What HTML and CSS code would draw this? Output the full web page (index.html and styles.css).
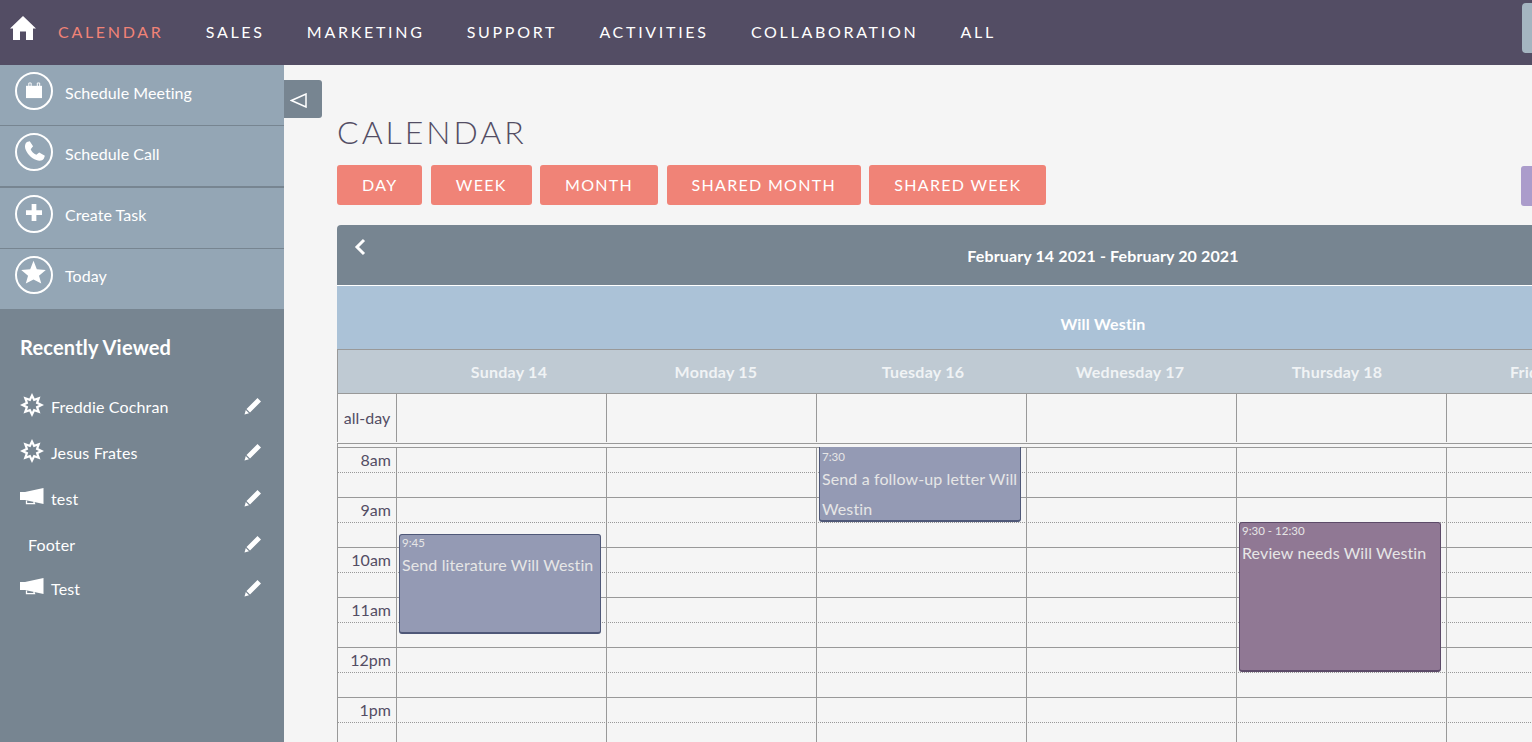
FILE: index.html
```html
<!DOCTYPE html>
<html lang="en">
<head>
    <meta charset="UTF-8">
    <meta name="viewport" content="width=device-width, initial-scale=1.0">
    <title>Calendar</title>
    <link rel="stylesheet" href="styles.css">
</head>
<body>
    <div class="topnav">
        <svg class="home-icon" viewBox="0 0 26 26"><path d="M13 1 L26 13.5 L23 13.5 L23 25 L16 25 L16 16.5 L10 16.5 L10 25 L3 25 L3 13.5 L0 13.5 Z" fill="#fff"/></svg>
        <a class="nav-link active">Calendar</a>
        <a class="nav-link">Sales</a>
        <a class="nav-link">Marketing</a>
        <a class="nav-link">Support</a>
        <a class="nav-link">Activities</a>
        <a class="nav-link">Collaboration</a>
        <a class="nav-link">All</a>
        <div class="nav-search"></div>
    </div>

    <div class="layout">
        <div class="sidebar">
            <div class="action-row">
                <span class="action-icon">
                    <svg viewBox="0 0 36 36"><path d="M9.5 12.5 H26.5 V25.5 H9.5 Z" fill="#fff"/><path d="M12.5 13 V9.5 H15 V13 M21.5 13 V9.5 H24 V13" fill="none" stroke="#fff" stroke-width="1"/></svg>
                </span>
                Schedule Meeting
            </div>
            <div class="action-row wide">
                <span class="action-icon">
                    <svg viewBox="0 0 36 36"><path d="M10.5 7.5 L13.5 6.5 L17 12 L14.5 15 C15.5 17.5 17.5 19.5 20.5 21 L23.5 18.5 L29.5 22 L28.5 25 C27 27.5 23.5 28 20.5 26.5 C15 24.5 10.5 19.5 8.8 14.5 C8 12 8.5 9 10.5 7.5 Z" fill="#fff"/></svg>
                </span>
                Schedule Call
            </div>
            <div class="action-row low">
                <span class="action-icon">
                    <svg viewBox="0 0 36 36"><path d="M15.5 7.5 H20.5 V14 H26.5 V19 H20.5 V25.5 H15.5 V19 H9.5 V14 H15.5 Z" fill="#fff"/></svg>
                </span>
                Create Task
            </div>
            <div class="action-row low last">
                <span class="action-icon">
                    <svg viewBox="0 0 36 36"><path d="M17.5 3 L21 12 L30.5 12.7 L23.3 18.8 L25.7 27 L17.5 22.8 L9.3 27 L11.7 18.8 L4.5 12.7 L14 12 Z" fill="#fff"/></svg>
                </span>
                Today
            </div>

            <div class="recent">
                <h3>Recently Viewed</h3>
                <div class="recent-item">
                    <svg class="recent-icon" viewBox="0 0 24 24"><path fill-rule="evenodd" d="M12 0 14.68 5.53 20.49 3.51 18.47 9.32 24 12 18.47 14.68 20.49 20.49 14.68 18.47 12 24 9.32 18.47 3.51 20.49 5.53 14.68 0 12 5.53 9.32 3.51 3.51 9.32 5.53Z M12 5.1 13.57 8.21 16.88 7.12 15.79 10.43 18.9 12 15.79 13.57 16.88 16.88 13.57 15.79 12 18.9 10.43 15.79 7.12 16.88 8.21 13.57 5.1 12 8.21 10.43 7.12 7.12 10.43 8.21Z" fill="#fff"/></svg>
                    <span class="recent-name">Freddie Cochran</span>
                    <svg class="pencil" viewBox="0 0 18 18"><path d="M13.5 1 L17 4.5 L6 15.5 L2.5 12 Z M1.8 13 L5 16.2 L0.5 17.5 Z" fill="#fff"/></svg>
                </div>
                <div class="recent-item">
                    <svg class="recent-icon" viewBox="0 0 24 24"><path fill-rule="evenodd" d="M12 0 14.68 5.53 20.49 3.51 18.47 9.32 24 12 18.47 14.68 20.49 20.49 14.68 18.47 12 24 9.32 18.47 3.51 20.49 5.53 14.68 0 12 5.53 9.32 3.51 3.51 9.32 5.53Z M12 5.1 13.57 8.21 16.88 7.12 15.79 10.43 18.9 12 15.79 13.57 16.88 16.88 13.57 15.79 12 18.9 10.43 15.79 7.12 16.88 8.21 13.57 5.1 12 8.21 10.43 7.12 7.12 10.43 8.21Z" fill="#fff"/></svg>
                    <span class="recent-name">Jesus Frates</span>
                    <svg class="pencil" viewBox="0 0 18 18"><path d="M13.5 1 L17 4.5 L6 15.5 L2.5 12 Z M1.8 13 L5 16.2 L0.5 17.5 Z" fill="#fff"/></svg>
                </div>
                <div class="recent-item">
                    <svg class="recent-icon" viewBox="0 0 24 24"><path d="M0 7 H5 L23.5 3 V19 L5 15 H0 Z" fill="#fff"/><path d="M6.5 15.5 V18.7 H14.5 L13.7 16.5" fill="none" stroke="#fff" stroke-width="1.3"/></svg>
                    <span class="recent-name">test</span>
                    <svg class="pencil" viewBox="0 0 18 18"><path d="M13.5 1 L17 4.5 L6 15.5 L2.5 12 Z M1.8 13 L5 16.2 L0.5 17.5 Z" fill="#fff"/></svg>
                </div>
                <div class="recent-item no-icon">
                    <span class="recent-name">Footer</span>
                    <svg class="pencil" viewBox="0 0 18 18"><path d="M13.5 1 L17 4.5 L6 15.5 L2.5 12 Z M1.8 13 L5 16.2 L0.5 17.5 Z" fill="#fff"/></svg>
                </div>
                <div class="recent-item short">
                    <svg class="recent-icon" viewBox="0 0 24 24"><path d="M0 7 H5 L23.5 3 V19 L5 15 H0 Z" fill="#fff"/><path d="M6.5 15.5 V18.7 H14.5 L13.7 16.5" fill="none" stroke="#fff" stroke-width="1.3"/></svg>
                    <span class="recent-name">Test</span>
                    <svg class="pencil" viewBox="0 0 18 18"><path d="M13.5 1 L17 4.5 L6 15.5 L2.5 12 Z M1.8 13 L5 16.2 L0.5 17.5 Z" fill="#fff"/></svg>
                </div>
            </div>
        </div>

        <div class="main">
            <div class="toggle">
                <svg viewBox="0 0 17 15"><path d="M16 1 V14 L1.5 7.5 Z" fill="none" stroke="#fff" stroke-width="1.5"/></svg>
            </div>
            <h1>Calendar</h1>
            <div class="view-buttons">
                <button class="button">Day</button>
                <button class="button">Week</button>
                <button class="button">Month</button>
                <button class="button">Shared Month</button>
                <button class="button">Shared Week</button>
                <button class="button settings"></button>
            </div>

            <div class="calendar">
                <div class="cal-header">
                    <svg class="prev" viewBox="0 0 12 18"><path d="M10 2 L3 9 L10 16" fill="none" stroke="#fff" stroke-width="3"/></svg>
                    February 14 2021 - February 20 2021
                </div>
                <div class="cal-user">Will Westin</div>
                <div class="cal-days">
                    <div class="axis"></div>
                    <div class="day-name">Sunday 14</div>
                    <div class="day-name">Monday 15</div>
                    <div class="day-name">Tuesday 16</div>
                    <div class="day-name">Wednesday 17</div>
                    <div class="day-name">Thursday 18</div>
                    <div class="day-name">Friday 19</div>
                    <div class="day-name">Saturday 20</div>
                </div>
                <div class="all-day">
                    <div class="axis">all-day</div>
                </div>
                <div class="time-grid">
                    <div class="hour"><span class="hour-label">8am</span></div>
                    <div class="hour"><span class="hour-label">9am</span></div>
                    <div class="hour"><span class="hour-label">10am</span></div>
                    <div class="hour"><span class="hour-label">11am</span></div>
                    <div class="hour"><span class="hour-label">12pm</span></div>
                    <div class="hour"><span class="hour-label">1pm</span></div>

                    <div class="event blue ev-literature">
                        <div class="event-time">9:45</div>
                        <div class="event-title">Send literature Will Westin</div>
                    </div>
                    <div class="event blue ev-letter">
                        <div class="event-time">7:30</div>
                        <div class="event-title">Send a follow-up letter Will Westin</div>
                    </div>
                    <div class="event purple ev-review">
                        <div class="event-time">9:30 - 12:30</div>
                        <div class="event-title">Review needs Will Westin</div>
                    </div>
                </div>
            </div>
        </div>
    </div>
</body>
</html>
```

FILE: styles.css
```css
html, body {
    height: 100%;
    overflow: hidden;
}
body {
    font-family: 'Lato', sans-serif;
    background-color: #f5f5f5;
    margin: 0;
    padding: 0;
}
.topnav {
    display: flex;
    align-items: center;
    height: 65px;
    padding-bottom: 2px;
    box-sizing: border-box;
    background: #534d64;
    position: relative;
}
.home-icon {
    width: 26px;
    height: 26px;
    margin: 0 22px 8px 10px;
}
.nav-link {
    font-size: 16px;
    color: #fff;
    text-transform: uppercase;
    letter-spacing: 2.7px;
    margin-right: 42.2px;
}
.nav-link.active {
    color: #f08377;
}
.nav-search {
    position: absolute;
    left: 1522px;
    top: 3px;
    width: 40px;
    height: 50px;
    background: #a5b5c1;
    border-radius: 4px;
}
.layout {
    display: flex;
    height: 677px;
}
.sidebar {
    width: 284px;
    flex-shrink: 0;
    background: #778591;
}
.action-row {
    display: flex;
    align-items: center;
    height: 61px;
    padding: 0 0 6px 15px;
    box-sizing: border-box;
    background: #94a6b5;
    border-bottom: 1px solid #778591;
    color: #fff;
    font-size: 16px;
    letter-spacing: 0.05px;
}
.action-row.wide {
    height: 62px;
    border-bottom-width: 2px;
}
.action-row.low {
    padding-bottom: 8px;
}
.action-row.last {
    height: 60px;
    border-bottom: none;
}
.action-icon {
    width: 34px;
    height: 34px;
    border: 2px solid #fff;
    border-radius: 50%;
    margin: 0 12px 2px 0;
    flex-shrink: 0;
}
.action-row.low .action-icon {
    margin-bottom: 0;
}
.action-icon svg {
    display: block;
    width: 34px;
    height: 34px;
}
.recent {
    padding: 20px 20px 0 20px;
}
.recent h3 {
    margin: 0 0 18px 0;
    font-size: 20px;
    line-height: 36px;
    font-weight: 700;
    letter-spacing: 0.2px;
    color: #fff;
}
.recent-item {
    display: flex;
    align-items: center;
    height: 46px;
    color: #fff;
    font-size: 16px;
    letter-spacing: 0.15px;
}
.recent-item.short {
    height: 42px;
}
.recent-item.no-icon .recent-name {
    margin-left: 8px;
}
.recent-icon {
    width: 24px;
    height: 24px;
    margin-right: 7px;
    margin-bottom: 2px;
}
.recent-name {
    flex: 1;
}
.pencil {
    width: 18px;
    height: 18px;
    margin-right: 2px;
}
.main {
    flex: 1;
    min-width: 0;
    padding: 0 0 0 53px;
    position: relative;
}
.toggle {
    position: absolute;
    left: 0;
    top: 15px;
    width: 38px;
    height: 38px;
    box-sizing: border-box;
    padding: 13px 15px 10px 6px;
    background: #778591;
    border-radius: 0 3px 3px 0;
}
.toggle svg {
    display: block;
    width: 17px;
    height: 15px;
}
h1 {
    margin: 0;
    padding-top: 47px;
    font-size: 32px;
    line-height: 40px;
    font-weight: 300;
    color: #534d64;
    text-transform: uppercase;
    letter-spacing: 3px;
}
.view-buttons {
    display: flex;
    gap: 8.4px;
    margin-top: 13px;
    width: 1532px;
}
.button {
    height: 40px;
    padding: 0 25px 2px 25px;
    border: none;
    border-radius: 3px;
    background-color: #f08377;
    color: #fff;
    font-family: 'Lato', sans-serif;
    font-size: 16px;
    text-transform: uppercase;
    letter-spacing: 1.3px;
}
.button.settings {
    width: 60px;
    margin: 1px 0 -1px 466px;
    background-color: #ab9ccb;
}
.calendar {
    width: 1532px;
    margin-top: 20px;
}
.cal-header {
    position: relative;
    height: 60px;
    box-sizing: border-box;
    background: #778591;
    border-radius: 4px 4px 0 0;
    color: #fff;
    font-size: 16px;
    letter-spacing: 0.13px;
    font-weight: 700;
    text-align: center;
    line-height: 62px;
}
.prev {
    position: absolute;
    left: 17px;
    top: 13px;
    width: 12px;
    height: 18px;
}
.cal-user {
    height: 63px;
    border-top: 1px solid #fff;
    background: #abc2d7;
    color: #fff;
    font-size: 16px;
    letter-spacing: 0.2px;
    font-weight: 700;
    text-align: center;
    line-height: 76px;
}
.cal-days {
    display: flex;
    height: 43px;
    background: #bfcad3;
    border-top: 1px solid #999;
    border-bottom: 1px solid #999;
    border-left: 1px solid #999;
}
.cal-days .axis {
    width: 67.5px;
}
.axis {
    flex-shrink: 0;
}
.day-name {
    width: 207px;
    flex-shrink: 0;
    color: #f0f3f5;
    font-size: 16px;
    letter-spacing: 0.25px;
    font-weight: 700;
    text-align: center;
    line-height: 44px;
}
.all-day {
    height: 48px;
    margin-bottom: 1px;
    border-left: 1px solid #999;
    background-image: repeating-linear-gradient(90deg, #999 0, #999 1px, transparent 1px, transparent 210px);
    background-position: 58px 0;
    background-size: 100% 100%;
}
.all-day .axis {
    height: 100%;
    width: 58px;
    background: #f5f5f5;
    text-align: center;
    color: #534d64;
    font-size: 16px;
    line-height: 48px;
}
.time-grid {
    position: relative;
    height: 300px;
    border-top: 1px solid #999;
    border-left: 1px solid #999;
    padding-top: 3px;
    background-color: #f5f5f5;
}
.hour {
    position: relative;
    height: 50px;
    box-sizing: border-box;
    border-top: 1px solid #999;
    background-image: repeating-linear-gradient(90deg, #999 0, #999 1px, transparent 1px, transparent 210px);
    background-position: 58px 0;
    background-size: 100% 100%;
}
.hour::after {
    content: "";
    position: absolute;
    left: 0;
    right: 0;
    top: 24px;
    border-top: 1px dotted #999;
}
.hour-label {
    display: block;
    width: 53px;
    text-align: right;
    color: #534d64;
    font-size: 16px;
    line-height: 24px;
}
.event {
    position: absolute;
    box-sizing: border-box;
    width: 202px;
    border-radius: 3px;
    border: 1px solid #534d64;
    border-bottom-width: 2px;
    padding: 0 2px;
    color: #e6e6e6;
    z-index: 1;
}
.event.blue {
    background: #949ab4;
    border-color: #4f5878;
}
.event.purple {
    background: #907894;
    border-color: #5c4a68;
}
.ev-literature {
    left: 61px;
    top: 90px;
    height: 100px;
}
.ev-letter {
    left: 481px;
    top: 3px;
    height: 75px;
    padding-top: 2px;
    border-top: none;
    border-radius: 0 0 3px 3px;
}
.ev-review {
    left: 901px;
    top: 78px;
    height: 150px;
}
.event-time {
    font-size: 11.5px;
    line-height: 15px;
}
.event-title {
    font-size: 16px;
    letter-spacing: 0.12px;
    line-height: 30px;
}
```
